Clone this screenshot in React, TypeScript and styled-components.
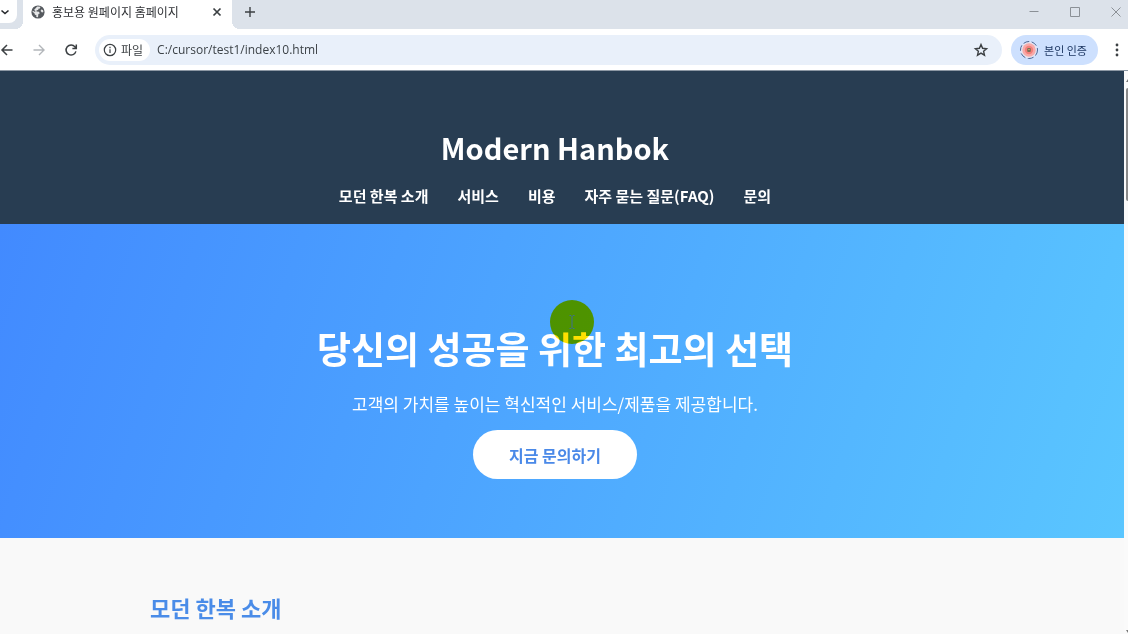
import React from "react";
import styled, { createGlobalStyle } from "styled-components";

const GlobalStyle = createGlobalStyle`
  * { box-sizing: border-box; }
  body {
    margin: 0;
    background: #f9f9f9;
    font-family: "Noto Sans CJK KR", sans-serif;
    overflow: hidden;
  }
  button, input { font: inherit; color: inherit; }
`;

const Window = styled.div`
  display: flex;
  flex-direction: column;
  height: 100vh;
  overflow: hidden;
`;

const TabStrip = styled.div`
  display: flex;
  height: 29px;
  background: #dce2ea;
`;

const IconButton = styled.button<{ $size?: number; $color?: string }>`
  display: flex;
  align-items: center;
  justify-content: center;
  flex: none;
  width: ${(p) => p.$size ?? 24}px;
  height: 24px;
  padding: 0;
  border: 0;
  background: transparent;
  color: ${(p) => p.$color ?? "#3c4043"};
`;

const TabSearch = styled.button`
  display: flex;
  align-items: center;
  width: 17px;
  height: 23px;
  margin-right: 6px;
  padding: 0;
  border: 0;
  border-radius: 0 0 8px 0;
  background: #fff;
  color: #24272b;
`;

const Tab = styled.div`
  position: relative;
  display: flex;
  align-items: center;
  width: 209px;
  padding: 0 4px 6px 8px;
  background: #fff;
  color: #303236;
  font-size: 12px;
  line-height: 16px;

  &::before,
  &::after {
    content: "";
    position: absolute;
    bottom: 0;
    width: 8px;
    height: 8px;
  }
  &::before {
    right: 100%;
    background: radial-gradient(circle at 0 0, transparent 8px, #fff 8px);
  }
  &::after {
    left: 100%;
    background: radial-gradient(circle at 100% 0, transparent 8px, #fff 8px);
  }
`;

const TabTitle = styled.span`
  flex: 1;
  margin-left: 7px;
  white-space: nowrap;
`;

const NewTab = styled(IconButton)`
  margin-left: 6px;
`;

const WindowControls = styled.div`
  display: flex;
  gap: 17px;
  margin-left: auto;
`;

const Toolbar = styled.div`
  display: flex;
  align-items: center;
  flex: none;
  height: 42px;
  background: #fff;
  border-bottom: 1px solid #8d98a4;
`;

const NavButtons = styled.div`
  display: flex;
  gap: 8px;
  margin: 0 12px 0 -5px;
`;

const AddressBar = styled.div`
  display: flex;
  align-items: center;
  flex: 1;
  height: 30px;
  padding: 0 9px 0 4px;
  border-radius: 15px;
  background: #e9f0fa;
`;

const FileChip = styled.button`
  display: flex;
  align-items: center;
  gap: 4px;
  flex: none;
  height: 22px;
  padding: 0 7px 0 4px;
  border: 0;
  border-radius: 11px;
  background: #fff;
  color: #3c4043;
  font-size: 12px;
  line-height: 16px;
`;

const Address = styled.input`
  flex: 1;
  min-width: 0;
  margin-left: 7px;
  padding: 0;
  border: 0;
  outline: 0;
  background: transparent;
  color: #3c4247;
  font: 12px/18px "Open Sans", sans-serif;
`;

const ProfileChip = styled.button`
  display: flex;
  align-items: center;
  gap: 5px;
  height: 30px;
  margin: 0 8px 0 9px;
  padding: 0 11px 0 8px;
  border: 0;
  border-radius: 15px;
  background: #cde0fe;
  color: #1b3561;
  font-size: 11px;
  line-height: 16px;
`;

const Viewport = styled.div`
  display: flex;
  flex: 1;
  min-height: 0;
`;

const Page = styled.div`
  flex: 1;
  min-width: 0;
  overflow: hidden;
  background: #f9f9f9;
`;

const Scrollbar = styled.div`
  display: flex;
  flex-direction: column;
  align-items: flex-end;
  justify-content: space-between;
  width: 4px;
  padding: 8px 0 1px;
  background: #fafafa;
`;

const Thumb = styled.div`
  width: 2px;
  height: 113px;
  margin: 6px 0 auto;
  border-radius: 2px 0 0 2px;
  background: #8a8a8a;
`;

const SiteHeader = styled.header`
  padding: 54px 14px 17px 0;
  background: #283d52;
  color: #fff;
  text-align: center;
`;

const Brand = styled.h1`
  margin: 0 0 15px;
  font-size: 29px;
  line-height: 44px;
  font-weight: 700;
`;

const SiteNav = styled.nav`
  display: flex;
  justify-content: center;
  gap: 29px;
`;

const NavLink = styled.a`
  color: #fff;
  font-size: 15px;
  font-weight: 700;
  line-height: 23px;
  text-decoration: none;
`;

const Hero = styled.section`
  position: relative;
  padding: 96px 14px 59px 0;
  background: linear-gradient(108deg, #428aff, #5ac6ff);
  color: #fff;
  text-align: center;
`;

const HeroTitle = styled.h2`
  margin: 0 0 16px;
  font-size: 37px;
  font-weight: 700;
  line-height: 56px;
`;

const HeroText = styled.p`
  margin: 0 0 14px;
  font-size: 17px;
  line-height: 24px;
`;

const HeroButton = styled.button`
  height: 49px;
  padding: 0 36px;
  border: 0;
  border-radius: 25px;
  background: #fff;
  color: #4a89e8;
  font-size: 16px;
  font-weight: 700;
  line-height: 24px;
`;

const CursorHighlight = styled.div`
  position: absolute;
  top: 76px;
  left: calc(50% - 12px);
  display: flex;
  align-items: center;
  justify-content: center;
  width: 44px;
  height: 44px;
  border-radius: 50%;
  background: #ffe000;
  mix-blend-mode: multiply;
`;

const Section = styled.section`
  padding: 53px 14px 0 0;
`;

const Container = styled.div`
  max-width: 810px;
  margin: 0 auto;
`;

const SectionTitle = styled.h2`
  margin: 0;
  color: #4a8ce8;
  font-size: 22px;
  font-weight: 700;
  line-height: 33px;
`;

const Stroke = ({
  d,
  size = 16,
  width = 2,
}: {
  d: string;
  size?: number;
  width?: number;
}) => (
  <svg
    width={size}
    height={size}
    viewBox="0 0 16 16"
    fill="none"
    stroke="currentColor"
    strokeWidth={width}
    aria-hidden="true"
  >
    <path d={d} />
  </svg>
);

const Globe = () => (
  <svg width="14" height="14" viewBox="0 0 14 14" aria-hidden="true">
    <circle cx="7" cy="7" r="6.6" fill="#55595e" />
    <path
      d="M6.2 1.6 9.4 1.7 9 3.4 7.4 3.8 7.2 5 5.6 5.3 5.5 6.6 8 6.8 8.8 8.4 7.4 9 7 12.3 5.2 12 5.5 10.4 3.8 9.6 3.3 8 1.6 7 1.6 5.8 4.2 7 4.3 5.8 3 5ZM10.2 4.4 12 5 12.4 7 11 7.4 9.6 6Z"
      fill="#fff"
      opacity=".85"
    />
  </svg>
);

const Avatar = () => (
  <svg width="20" height="20" viewBox="0 0 20 20" aria-hidden="true">
    <circle cx="10" cy="10" r="8.5" fill="#e3e4f3" stroke="#4a6795" strokeWidth="1" strokeDasharray="6 2.5" />
    <circle cx="10" cy="10" r="6.7" fill="#f8aaa8" />
    <circle cx="10" cy="10" r="4.2" fill="#f3807b" />
    <rect x="8.2" y="8" width="3.6" height="4" rx="1" fill="#7d6d55" />
    <path d="M9 9.5h2" stroke="#b59d6c" />
  </svg>
);

const links = ["모던 한복 소개", "서비스", "비용", "자주 묻는 질문(FAQ)", "문의"];

export default function App() {
  return (
    <Window>
      <GlobalStyle />
      <TabStrip>
        <TabSearch aria-label="탭 검색">
          <Stroke d="m1.5 6.5 3.5 3 3.5-3" width={1.6} />
        </TabSearch>
        <Tab>
          <Globe />
          <TabTitle>홍보용 원페이지 홈페이지</TabTitle>
          <IconButton $size={22} aria-label="탭 닫기">
            <Stroke d="m4.5 4.5 7 7m0-7-7 7" width={1.7} />
          </IconButton>
        </Tab>
        <NewTab aria-label="새 탭">
          <Stroke d="M8 3v10M3 8h10" width={1.4} />
        </NewTab>
        <WindowControls>
          <IconButton $color="#8b9096" aria-label="최소화">
            <Stroke d="M3.5 7.5h9" width={1} />
          </IconButton>
          <IconButton $color="#8b9096" aria-label="최대화">
            <Stroke d="M3.5 3.5h9v9h-9z" width={1} />
          </IconButton>
          <IconButton $color="#8b9096" aria-label="닫기">
            <Stroke d="m3.5 3.5 9 9m0-9-9 9" width={1} />
          </IconButton>
        </WindowControls>
      </TabStrip>

      <Toolbar>
        <NavButtons>
          <IconButton aria-label="뒤로">
            <Stroke d="M13.5 8H3m5-5L3 8l5 5" width={1.5} />
          </IconButton>
          <IconButton $color="#b3b6ba" aria-label="앞으로">
            <Stroke d="M2.5 8H13M8 3l5 5-5 5" width={1.4} />
          </IconButton>
          <IconButton aria-label="새로고침">
            <Stroke d="M12.9 9.4A5 5 0 1 1 12 4.9L13 6M13.3 2.5V6.4H9.4" width={1.5} />
          </IconButton>
        </NavButtons>
        <AddressBar>
          <FileChip>
            <Stroke
              size={14}
              width={1.4}
              d="M8 1.5a6.5 6.5 0 1 0 0 13 6.5 6.5 0 0 0 0-13ZM8 7.2v4.2M8 4.4V6"
            />
            파일
          </FileChip>
          <Address aria-label="주소창" defaultValue="C:/cursor/test1/index10.html" />
          <IconButton aria-label="북마크">
            <Stroke d="m8 2.6 1.6 3.7 4 .4-3 2.6.9 3.9L8 11.1l-3.5 2.1.9-3.9-3-2.6 4-.4Z" width={1.4} />
          </IconButton>
        </AddressBar>
        <ProfileChip>
          <Avatar />
          본인 인증
        </ProfileChip>
        <IconButton $size={22} aria-label="메뉴">
          <svg width="16" height="16" viewBox="0 0 16 16" fill="currentColor" aria-hidden="true">
            <circle cx="8" cy="3" r="1.4" />
            <circle cx="8" cy="8" r="1.4" />
            <circle cx="8" cy="13" r="1.4" />
          </svg>
        </IconButton>
      </Toolbar>

      <Viewport>
        <Page>
          <SiteHeader>
            <Brand>Modern Hanbok</Brand>
            <SiteNav>
              {links.map((label) => (
                <NavLink key={label} href="#about">
                  {label}
                </NavLink>
              ))}
            </SiteNav>
          </SiteHeader>
          <Hero>
            <HeroTitle>당신의 성공을 위한 최고의 선택</HeroTitle>
            <HeroText>고객의 가치를 높이는 혁신적인 서비스/제품을 제공합니다.</HeroText>
            <HeroButton>지금 문의하기</HeroButton>
            <CursorHighlight>
              <svg width="8" height="16" viewBox="0 0 8 16" fill="none" stroke="#c8a890" aria-hidden="true">
                <path d="M1.5 1.5h1.5l1 1 1-1h1.5M4 2.5v11M1.5 14.5h1.5l1-1 1 1h1.5" />
              </svg>
            </CursorHighlight>
          </Hero>
          <Section id="about">
            <Container>
              <SectionTitle>모던 한복 소개</SectionTitle>
            </Container>
          </Section>
        </Page>
        <Scrollbar>
          <svg width="2" height="3" viewBox="0 0 2 3" aria-hidden="true">
            <path d="M2 0v3H0z" fill="#777" />
          </svg>
          <Thumb />
          <svg width="2" height="3" viewBox="0 0 2 3" aria-hidden="true">
            <path d="M0 0h2v3z" fill="#777" />
          </svg>
        </Scrollbar>
      </Viewport>
    </Window>
  );
}
